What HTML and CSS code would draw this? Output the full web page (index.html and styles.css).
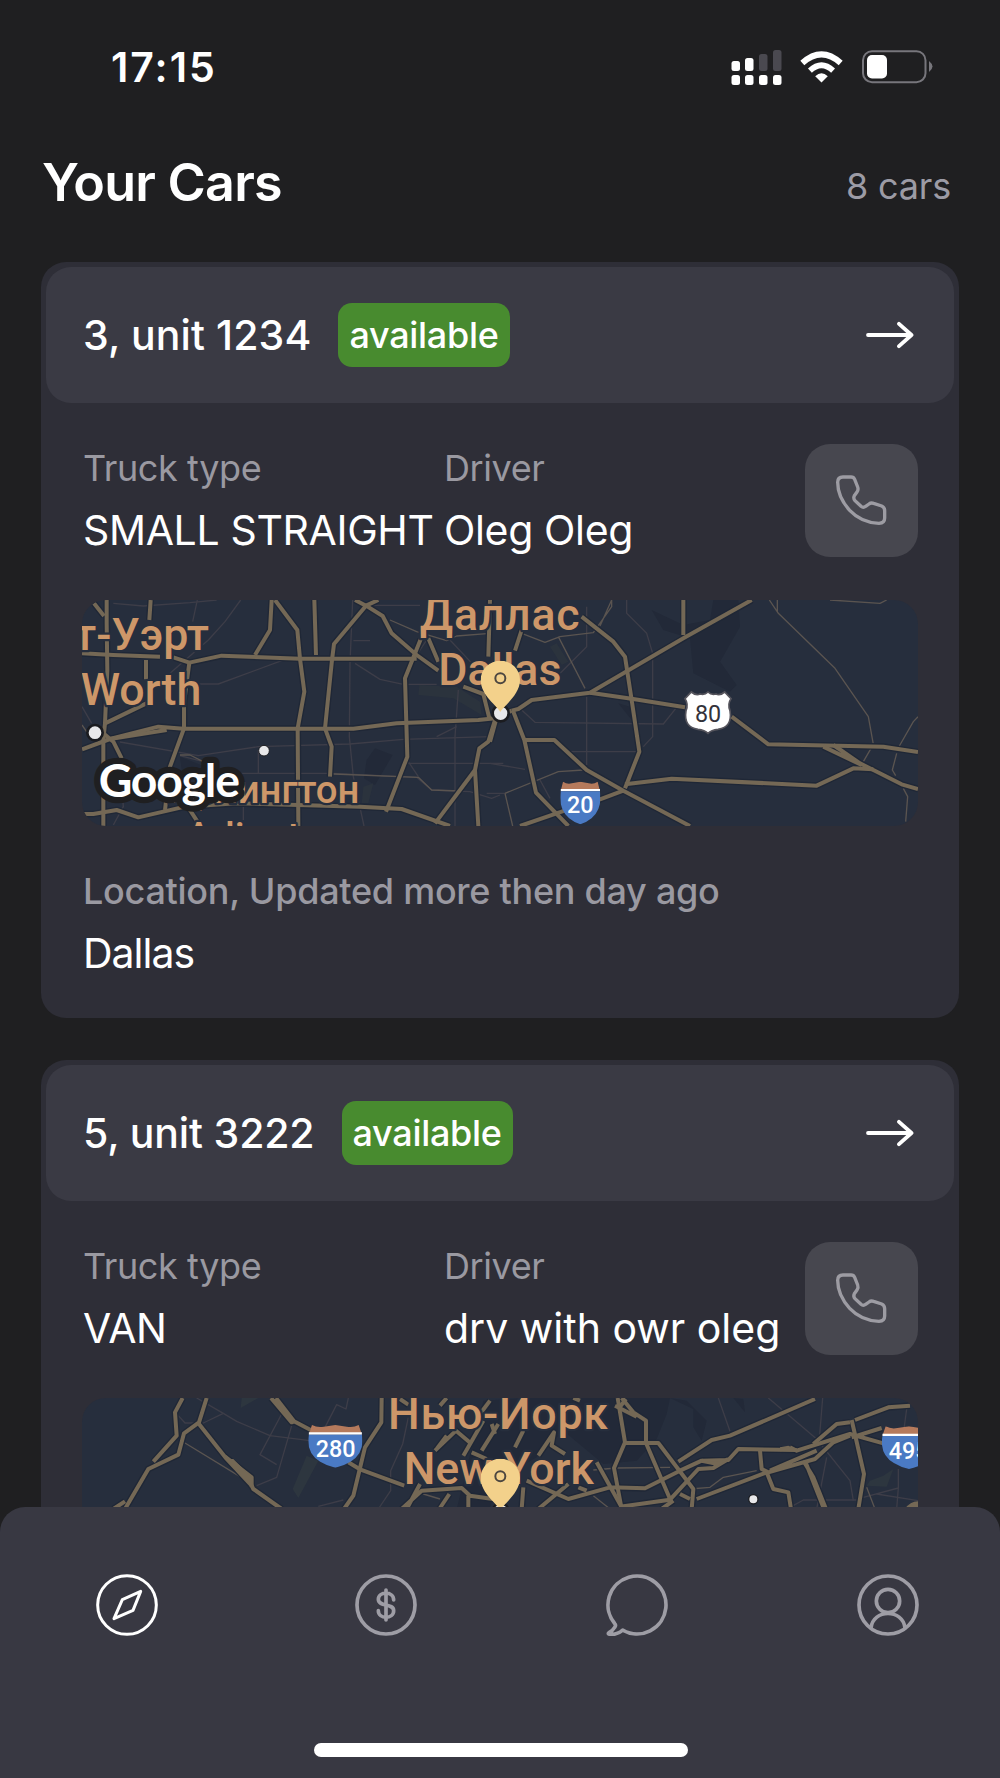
FILE: index.html
```html
<!DOCTYPE html>
<html lang="en">
<head>
	<meta charset="utf-8">
	<title>Your Cars</title>
	<link rel="stylesheet" href="styles.css">
</head>
<body>

<div class="screen">
	<div class="status-bar">
		<span class="time">17:15</span>
		<div class="status-icons">
			<svg class="signal" viewBox="0 0 51 36">
				<g fill="#4a4950">
					<rect x="28" y="5" width="8.5" height="17" rx="2.5"/>
					<rect x="42" y="1" width="8.5" height="21" rx="2.5"/>
				</g>
				<g fill="#fff">
					<rect x="0.5" y="12" width="8.5" height="10" rx="2.5"/>
					<rect x="14" y="9" width="8.5" height="13" rx="2.5"/>
					<rect x="0.5" y="26" width="8.5" height="10" rx="2.5"/>
					<rect x="14" y="26" width="8.5" height="10" rx="2.5"/>
					<rect x="28" y="26" width="8.5" height="10" rx="2.5"/>
					<rect x="42" y="26" width="8.5" height="10" rx="2.5"/>
				</g>
			</svg>
			<svg class="wifi" viewBox="0 0 130 96">
				<path d="M65 95 L46 76 Q65 58 84 76 Z" fill="#fff"/>
				<path d="M30 59 Q65 26 100 59" fill="none" stroke="#fff" stroke-width="17"/>
				<path d="M7 36 Q65 -16 123 36" fill="none" stroke="#fff" stroke-width="18"/>
			</svg>
			<svg class="battery" viewBox="0 0 71 34">
				<rect x="1" y="1.2" width="62.5" height="31" rx="9" fill="none" stroke="#77767c" stroke-width="2"/>
				<rect x="5" y="5" width="20" height="23.5" rx="5" fill="#fff"/>
				<path d="M67 11 Q74 16.7 67 22 Z" fill="#77767c"/>
			</svg>
		</div>
	</div>

	<div class="page-header">
		<h1>Your Cars</h1>
		<span class="count">8 cars</span>
	</div>

	<div class="cars">
		<div class="card">
			<div class="card-header">
				<span class="unit">3, unit 1234</span>
				<span class="badge">available</span>
				<svg class="arrow" viewBox="0 0 48 28"><path d="M2 14 H45 M33 2.8 L45.5 14 L33 25.2"/></svg>
			</div>
			<div class="card-body">
				<div class="info">
					<div class="field">
						<span class="label">Truck type</span>
						<span class="value">SMALL STRAIGHT</span>
					</div>
					<div class="field">
						<span class="label">Driver</span>
						<span class="value">Oleg Oleg</span>
					</div>
					<a class="call" href="#">
						<svg viewBox="1000 666 168 168"><path d="M1030 681 H1054 Q1062 681 1065 688 L1074 711 Q1077 719 1072 726 L1064 737 Q1060 745 1066 752 L1084 769 Q1091 775 1098 769 L1108 762 Q1114 757 1122 760 L1146 768 Q1155 772 1155 782 V804 Q1155 819 1138 820 Q1085 818 1050 781 Q1014 742 1014 697 Q1014 681 1030 681 Z"/></svg>
					</a>
				</div>

				<svg class="map" viewBox="36 30 2508 678">
					<defs>
						<symbol id="interstate" viewBox="0 0 118 128" preserveAspectRatio="none">
							<path d="M8 0 Q20 9 34 5 L59 0 L84 5 Q98 9 110 0 L116 24 H2 Z" fill="#b57a5c"/>
							<path d="M1 22 H117 V29 H1 Z" fill="#fff"/>
							<path d="M1 29 H117 Q124 84 92 110 Q78 122 59 128 Q40 122 26 110 Q-6 84 1 29 Z" fill="#4a7ac4"/>
						</symbol>
						<symbol id="pin" viewBox="0 0 118 154">
							<path d="M59 154 C52 138 0 104 0 58 A59 58 0 0 1 118 58 C118 104 66 138 59 154 Z" fill="#f3d18b"/>
							<circle cx="59" cy="53" r="15" fill="none" stroke="#4d4740" stroke-width="6"/>
						</symbol>
						<g id="dallas-roads">
							<path d="M110 30 V100 L112 240 L105 400 L100 450 V708"/>
							<path d="M242 30 L238 90 M72 40 L102 78 M228 210 V268"/>
							<path d="M36 190 L130 195 L270 200 M310 202 L358 218 L455 197 L690 206 H1040"/>
							<path d="M605 30 L600 120 L555 195"/>
							<path d="M615 30 L682 120 L690 206 L703 305 L683 415 L685 708"/>
							<path d="M733 30 L738 195"/>
							<path d="M855 30 L888 47 L938 78 L965 130 L1040 195 L1105 242"/>
							<path d="M925 30 L888 47 L792 162 L786 210 L765 415 L785 470 L780 560"/>
							<path d="M1052 148 L1005 265 L1012 500 L948 665"/>
							<path d="M1075 145 L1105 215 M1260 30 L1255 200"/>
							<path d="M358 218 L342 340 V415 L300 530 L285 660"/>
							<path d="M36 478 L120 447 L265 410 L340 416 H850 L980 400 L1225 390 L1275 385 L1325 362"/>
							<path d="M120 447 L290 420"/>
							<path d="M105 400 L240 335 M100 430 L130 455 L155 505"/>
							<path d="M36 672 H70 L140 660 L205 682 L345 650 L500 640 L870 650 L995 657 L1140 708"/>
							<path d="M1275 390 L1255 455 L1228 475 L1215 540 L1225 708 M1215 540 L1095 700"/>
							<path d="M350 645 L382 694 M1180 290 L1240 312 L1258 385"/>
							<path d="M1535 80 L1630 155 L1665 200 L1685 330 L1708 485 L1665 595"/>
							<path d="M2045 30 L1840 145 L1560 308 L1385 330 L1345 357 L1325 362"/>
							<path d="M1840 30 V135 M1560 308 L1685 326 L1845 352"/>
							<path d="M1985 380 L2095 463 L2440 470 L2544 486"/>
							<path d="M2260 470 L2375 525 M2290 465 L2370 520 L2410 540 L2495 583 L2544 597"/>
							<path d="M1665 583 L1805 566 L2240 587 L2350 535 L2410 538"/>
							<path d="M1330 365 L1363 450 L1398 608 L1495 708"/>
							<path d="M1363 450 H1453 L1550 540 L1660 602 L1860 708"/>
							<path d="M1660 602 L1590 628 L1475 665 L1350 708"/>
							<path d="M1355 120 L1335 182 M1260 455 L1278 390"/>
						</g>
					</defs>
					<rect x="36" y="30" width="2508" height="678" fill="#262e3d"/>
					<g fill="#222938">
						<path d="M1930 30 H2005 L2010 110 L1950 215 L2000 285 L1980 305 L1870 250 L1860 145 L1780 120 L1745 60 L1840 105 L1920 90 Z"/>
						<path d="M915 475 L968 495 L915 585 L882 565 L890 510 Z M330 500 L430 540 L340 580 Z M1645 340 L1680 350 L1685 390 Z"/>
					</g>
					<path d="M1048 285 L1160 290 L1230 335 L1235 375 L1150 325 L1045 315 Z M1440 170 L1460 160 L1495 215 L1475 225 Z M880 590 L910 580 L895 640 H875 Z" fill="#2b333d"/>
					<g class="streets">
						<path d="M130 40 L220 48 L360 38 L440 30 M382 30 L368 95 M512 30 L465 95 L415 150 L300 250"/>
						<path d="M36 350 L65 400 M385 282 H445 L635 212 M150 456 L385 497 L565 470 L840 462 L1000 448 L1260 440"/>
						<path d="M330 497 L420 520 M565 480 V550 M450 550 H790 L1040 562 L1085 600 L1200 605 L1265 625 L1290 615"/>
						<path d="M848 30 L840 220 L838 440 L850 560 L882 708 M850 152 H900 M855 220 L930 268 L1000 283 H1100"/>
						<path d="M900 46 H1050 M1165 300 L1155 440 V708 M1010 520 H1300 M1015 515 L1045 560 M520 610 V690"/>
						<path d="M1070 150 L1040 195 M1140 150 L1215 230 M150 520 L160 650 L130 705 M1100 440 L1160 410"/>
						<path d="M1670 30 V70 L1730 130 L1748 190 V440 L1720 470 M1550 50 V170 L1450 270 M1550 320 V525"/>
						<path d="M1355 360 L1395 397 L1780 402 L1820 352 M1500 485 H1700"/>
						<path d="M1260 520 L1365 538 M1410 570 L1440 625 M1250 610 L1305 610"/>
					</g>
					<g class="lanes">
						<path d="M960 90 L1040 125 L1130 152 L1160 138 L1260 130 M1355 130 L1425 157 L1470 140 L1570 128 L1625 50 V30 M1465 140 L1545 295 M1590 108 L1625 30"/>
						<path d="M2098 30 L2125 70 L2295 235 L2395 380 L2410 463 L2380 515 M2122 30 V66"/>
						<path d="M2544 380 L2530 395 L2488 468 M2480 490 L2467 540 L2477 557 M2500 595 L2513 620 L2507 695"/>
						<path d="M2280 30 L2430 40 L2450 30 M1305 610 L1465 545 L1540 540 M1305 610 L1328 708"/>
						<path d="M330 495 H360 L410 520 M790 552 L1045 562 L1085 600 L1170 603 M36 405 L60 440"/>
					</g>
					<use href="#dallas-roads" class="casing"/>
					<use href="#dallas-roads" class="road"/>
					<g class="place">
						<text x="417" y="181" text-anchor="end">Форт-Уэрт</text>
						<text x="32" y="345">Worth</text>
						<text class="spaced" x="1049" y="121">Даллас</text>
						<text x="1105" y="286">Dallas</text>
						<text class="small" x="298" y="639">Арлингтон</text>
						<text class="small" x="348" y="780">Arlington</text>
					</g>
					<g class="dot">
						<circle cx="75" cy="428" r="23" stroke-width="8"/>
						<circle cx="582" cy="482" r="16" stroke-width="3"/>
						<circle cx="1292" cy="370" r="24" stroke-width="8"/>
					</g>
					<use href="#pin" x="1232" y="212" width="118" height="154"/>
					<path class="us-shield" d="M1864 306 Q1878 318 1890 312 Q1904 316 1914 306 Q1924 316 1938 312 Q1950 318 1964 306 L1983 326 Q1972 342 1980 362 Q1988 412 1944 418 Q1924 420 1914 430 Q1904 420 1884 418 Q1840 412 1848 362 Q1856 342 1845 326 Z"/>
					<text class="us-number" x="1914" y="396">80</text>
					<use href="#interstate" x="1471" y="575" width="120" height="128"/>
					<text class="number" x="1531" y="670">20</text>
					<text class="google" x="86" y="621">Google</text>
				</svg>

				<div class="location">
					<span class="label strong">Location, Updated more then day ago</span>
					<span class="value city">Dallas</span>
				</div>
			</div>
		</div>

		<div class="card">
			<div class="card-header">
				<span class="unit tight">5, unit 3222</span>
				<span class="badge">available</span>
				<svg class="arrow" viewBox="0 0 48 28"><path d="M2 14 H45 M33 2.8 L45.5 14 L33 25.2"/></svg>
			</div>
			<div class="card-body">
				<div class="info">
					<div class="field">
						<span class="label">Truck type</span>
						<span class="value">VAN</span>
					</div>
					<div class="field">
						<span class="label">Driver</span>
						<span class="value long">drv with owr oleg</span>
					</div>
					<a class="call" href="#">
						<svg viewBox="1000 666 168 168"><path d="M1030 681 H1054 Q1062 681 1065 688 L1074 711 Q1077 719 1072 726 L1064 737 Q1060 745 1066 752 L1084 769 Q1091 775 1098 769 L1108 762 Q1114 757 1122 760 L1146 768 Q1155 772 1155 782 V804 Q1155 819 1138 820 Q1085 818 1050 781 Q1014 742 1014 697 Q1014 681 1030 681 Z"/></svg>
					</a>
				</div>

				<svg class="map" viewBox="36 52 2508 678">
					<defs>
						<g id="newyork-roads">
							<path d="M338 52 L315 95 L320 165 L250 243"/>
							<path d="M410 52 L387 125 L342 158 L325 222 L235 265 L165 385"/>
							<path d="M387 130 L470 235 L545 315 L550 325 L635 385 M130 385 L165 362"/>
							<path d="M465 228 L545 290 L545 320 M603 52 L665 125 L672 122 L722 148 M618 52 L672 122"/>
							<path d="M835 245 L872 267 L1003 315"/>
							<path d="M935 52 L934 125 L885 200 L850 345 L822 385"/>
							<path d="M1095 210 L1158 150 L1205 190 M1240 120 L1180 225 M1100 205 L1130 165 M1110 75 L1130 52"/>
							<path d="M995 385 L1055 330 L1175 322 L1200 345 L1290 358 M1010 385 L1050 310 M1108 385 L1138 340 M1195 345 V385"/>
							<path d="M1205 215 L1250 235 M1285 130 L1235 210 M1260 60 L1230 100 M990 55 L1015 72"/>
							<path d="M1643 52 L1665 185 L1632 262 L1655 385"/>
							<path d="M1655 52 L1690 95 L1728 120 V187 M1635 75 L1700 108 M1668 55 L1650 78"/>
							<path d="M1665 187 H1765 L1870 325 L1865 385 M1728 187 L1800 355"/>
							<path d="M1580 245 L1655 380 M1370 300 L1495 355 L1620 320 L1725 323 L1830 270 L1895 240 L1975 238 L2005 205 L2180 208"/>
							<path d="M2160 200 L2180 210 L2340 160 L2440 188 M2345 170 L2435 142"/>
							<path d="M1405 385 L1495 310 M1650 378 L1800 357 L1885 265 L1930 262 L1975 235 M1895 240 L1945 250"/>
							<path d="M1825 243 L1925 178 L1980 165 L2235 55"/>
							<path d="M2355 118 L2455 80 L2520 75 M2230 190 L2300 130 L2340 125"/>
							<path d="M2345 118 L2382 280 L2365 385"/>
							<path d="M2070 210 L2075 265 L2095 275 L2235 235 L2290 185 L2340 165 M2100 270 L2240 210"/>
							<path d="M1880 355 L2090 275 L2110 325 L2155 335 L2163 385 M1830 340 L1860 355"/>
							<path d="M2200 240 L2230 290 L2268 385 M2205 240 L2262 385"/>
							<path d="M1335 200 L1360 150 M1405 225 L1452 155 L1445 195 L1485 220 M1355 385 L1360 320 M1275 160 L1265 130"/>
							<path d="M1775 385 L1810 360 M1510 52 L1530 60 M1525 320 L1550 330"/>
						</g>
					</defs>
					<rect x="36" y="52" width="2508" height="678" fill="#262e3d"/>
					<path d="M1590 52 H1800 L1790 100 L1760 175 L1700 240 L1600 250 L1480 150 L1400 230 L1280 300 L1260 385 L1160 385 L1240 60 L1360 52 Z M1800 52 L1850 60 L1910 120 L1895 180 L1870 140 L1870 85 Z M1990 52 L2025 95 L2020 55 Z" fill="#222938"/>
					<path d="M515 52 H565 L512 82 Z M710 225 L745 240 L685 352 L668 325 Z M2400 300 L2440 285 L2470 265 L2450 318 L2390 315 Z" fill="#2d363f"/>
					<g class="streets">
						<path d="M380 52 L460 98 L500 122 L600 165 L720 180 M635 100 L570 222 L620 252 M665 135 L620 290 L560 315"/>
						<path d="M325 105 L345 127 H400 L460 98 M765 140 L800 72 L828 85 L835 52 M1015 110 L998 190 L962 270 V330 L925 385 M745 377 L820 358"/>
						<path d="M1945 52 L1980 152 M2095 52 L2240 175 L2340 300 L2350 360 M2258 52 L2248 175 M2510 85 L2500 160"/>
						<path d="M2270 230 L2240 385 M2160 380 L2200 358 H2360 M2420 340 L2544 360 M2380 350 L2485 322 V265 M2485 322 L2480 385"/>
					</g>
					<g class="lanes">
						<path d="M345 187 L530 300 M1570 268 L1640 262 L1800 260 M1860 325 L1920 320 L1960 290 L2060 270"/>
						<path d="M2390 320 L2415 385 M1060 340 L1110 355 M1570 345 L1620 385"/>
					</g>
					<use href="#newyork-roads" class="casing"/>
					<use href="#newyork-roads" class="road"/>
					<path d="M465 235 L490 235 L545 290 L548 322 Z M1960 240 L1980 232 L1945 255 L1900 245 Z M2130 200 L2155 195 L2185 208 L2130 212 Z" fill="#746855"/>
					<path d="M2505 385 Q2520 362 2544 362 V385 Z" fill="#746855"/>
					<g class="place">
						<text class="spaced" x="954" y="145">Нью-Йорк</text>
						<text x="1001" y="309">New York</text>
					</g>
					<g class="dot">
						<circle cx="2050" cy="356" r="14" stroke-width="4"/>
						<circle cx="1292" cy="392" r="24" stroke-width="8"/>
					</g>
					<use href="#pin" x="1232" y="234" width="118" height="154"/>
					<use href="#interstate" x="715" y="133" width="162" height="128"/>
					<text class="number" x="797" y="230">280</text>
					<use href="#interstate" x="2436" y="137" width="162" height="128"/>
					<text class="number" x="2516" y="235">495</text>
				</svg>
			</div>
		</div>
	</div>

	<nav class="tab-bar">
		<div class="tabs">
			<a class="tab active" href="#"><svg viewBox="0 0 186 186"><circle cx="93" cy="93" r="88"/><path d="M134 52 L111 109 L54 134 L79 77 Z"/></svg></a>
			<a class="tab" href="#"><svg viewBox="0 0 186 186"><circle cx="93" cy="93" r="87"/><path d="M93 48 V138 M116 78 C116 50 70 52 70 76 C70 100 116 86 116 110 C116 136 70 136 70 110"/></svg></a>
			<a class="tab" href="#"><svg viewBox="0 0 186 186"><path d="M50 168.6 A87 87 0 1 0 26 148.5 Q31 153 26 160 Q20 170 9 176 Q4 180 12 181 Q34 183 50 168.6 Z"/></svg></a>
			<a class="tab" href="#"><svg viewBox="0 0 186 186"><circle cx="93" cy="93" r="87"/><circle cx="93" cy="81" r="35"/><path d="M42 162 C48 104 138 104 144 162"/></svg></a>
		</div>
		<div class="home-indicator"></div>
	</nav>
</div>

</body>
</html>
```
FILE: styles.css
```css
html, body {
	margin: 0;
	padding: 0;
}

body {
	background-color: #1f1f21;
	font-family: Inter, "Liberation Sans", sans-serif;
	color: #fff;
}

.screen {
	width: 1000px;
	height: 1778px;
	overflow: hidden;
	display: flex;
	flex-direction: column;
	position: relative;
}

/* status bar */
.status-bar {
	display: flex;
	justify-content: space-between;
	align-items: center;
	height: 134px;
	padding: 0 67px 0 111px;
	box-sizing: border-box;
	flex: none;
}

.time {
	font-size: 41px;
	font-weight: 600;
	letter-spacing: 2px;
}

.status-icons {
	display: flex;
	align-items: center;
}

.signal {
	width: 51px;
	height: 36px;
	margin-right: 18px;
}

.wifi {
	width: 43px;
	height: 32px;
	margin-right: 19px;
}

.battery {
	width: 71px;
	height: 34px;
}

/* title */
.page-header {
	display: flex;
	justify-content: space-between;
	height: 128px;
	padding: 0 49px 0 42px;
	box-sizing: border-box;
	flex: none;
}

h1 {
	margin: 0;
	font-size: 52px;
	font-weight: 600;
	line-height: 97px;
	letter-spacing: -0.75px;
}

.count {
	font-size: 36px;
	line-height: 104px;
	letter-spacing: -0.2px;
	color: #9c9ba5;
}

/* cards */
.cars {
	display: flex;
	flex-direction: column;
	gap: 41.5px;
	padding: 0 41px;
}

.card {
	height: 756px;
	padding: 5px;
	box-sizing: border-box;
	border-radius: 25px;
	background-color: #2e2e37;
	flex: none;
}

.card-header {
	display: flex;
	align-items: center;
	height: 136px;
	padding: 0 40px 0 37px;
	box-sizing: border-box;
	border-radius: 25px;
	background-color: #3a3a44;
}

.unit {
	font-size: 41px;
	font-weight: 500;
	letter-spacing: 0.1px;
}

.unit.tight {
	letter-spacing: -0.15px;
}

.badge {
	height: 64px;
	line-height: 64px;
	margin-left: 27px;
	padding: 0 11px;
	border-radius: 14px;
	background-color: #488b2f;
	font-size: 36px;
	font-weight: 500;
	letter-spacing: -0.3px;
}

.arrow {
	width: 48px;
	height: 28px;
	margin-left: auto;
	fill: none;
	stroke: #fff;
	stroke-width: 3.8;
	stroke-linecap: round;
	stroke-linejoin: round;
}

.card-body {
	padding: 41px 36px 0;
}

.info {
	display: grid;
	grid-template-columns: 361px 362px 113px;
}

.field, .location {
	display: flex;
	flex-direction: column;
	gap: 15px;
	padding-left: 1px;
	white-space: nowrap;
}

.field {
	padding-top: 2px;
}

.label {
	font-size: 36px;
	line-height: 44px;
	letter-spacing: -0.4px;
	color: #9a99a1;
}

.label.strong {
	font-weight: 500;
	letter-spacing: -0.27px;
}

.value {
	font-size: 41px;
	line-height: 50px;
	letter-spacing: -0.35px;
}

.value.long {
	letter-spacing: 0;
}

.value.city {
	letter-spacing: -1px;
}

.call {
	display: flex;
	align-items: center;
	justify-content: center;
	width: 113px;
	height: 113px;
	border-radius: 25px;
	background-color: #47474f;
}

.call svg {
	width: 56px;
	height: 56px;
	margin: 0 2px 1px 0;
	fill: none;
	stroke: #9d9ca3;
	stroke-width: 10;
}

/* maps */
.map {
	display: block;
	width: 836px;
	height: 226px;
	margin: 43px 0;
	border-radius: 24px;
	overflow: hidden;
}

.casing, .road, .streets, .lanes {
	fill: none;
	stroke-linejoin: round;
}

.casing {
	stroke: #1f2736;
	stroke-width: 20;
}

.road {
	stroke: #746855;
	stroke-width: 12;
}

.streets {
	stroke: #3d3d48;
	stroke-width: 4;
}

.lanes {
	stroke: #5a5450;
	stroke-width: 4;
}

.place {
	font-family: Roboto, sans-serif;
	font-size: 134px;
	font-weight: 500;
	fill: #cd9769;
	stroke: #262e3d;
	stroke-width: 14;
	stroke-linejoin: round;
	paint-order: stroke;
}

.place .small {
	font-size: 115px;
}

.place .spaced {
	letter-spacing: 2.4px;
}

.dot {
	fill: #e8e8ea;
	stroke: #1b1c20;
}

.number, .us-number {
	font-family: Roboto, sans-serif;
	font-size: 70px;
	font-weight: 500;
	fill: #fff;
	text-anchor: middle;
}

.us-shield {
	fill: #fff;
	stroke: #55545c;
	stroke-width: 5;
}

.us-number {
	font-weight: 400;
	fill: #33323a;
}

.google {
	font-family: Lato, sans-serif;
	font-size: 139px;
	font-weight: 700;
	letter-spacing: -3.5px;
	fill: #fff;
	stroke: #1f1f21;
	stroke-width: 38;
	stroke-linejoin: round;
	paint-order: stroke;
}

/* bottom navigation */
.tab-bar {
	position: absolute;
	left: 0;
	bottom: 0;
	width: 1000px;
	height: 271px;
	padding: 66.5px 81px 0 96px;
	box-sizing: border-box;
	border-radius: 25px 25px 0 0;
	background-color: #383842;
}

.tabs {
	display: flex;
	justify-content: space-between;
	height: 62px;
}

.tab {
	width: 62px;
	height: 62px;
}

.tab.active {
	margin-right: 8px;
}

.tab svg {
	display: block;
	width: 62px;
	height: 62px;
	fill: none;
	stroke: #9e9da5;
	stroke-width: 11;
	stroke-linecap: round;
	stroke-linejoin: round;
}

.tab.active svg {
	stroke: #fff;
	stroke-width: 9;
}

.home-indicator {
	width: 374px;
	height: 14px;
	margin: 107.5px 0 0 218px;
	border-radius: 7px;
	background-color: #fff;
}
```
